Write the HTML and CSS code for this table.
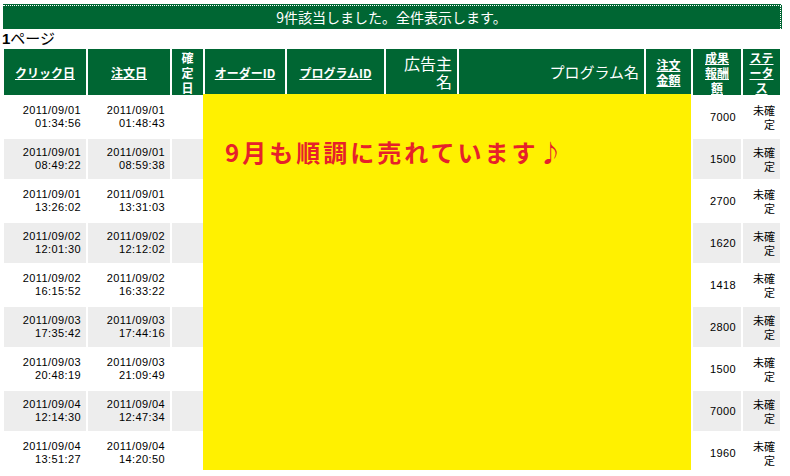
FILE: index.html
```html
<!DOCTYPE html>
<html lang="ja">
<head>
<meta charset="utf-8">
<title>成果一覧</title>
<link rel="stylesheet" href="styles.css">
</head>
<body>
<div class="banner">9件該当しました。全件表示します。</div>
<div class="pager"><b>1</b>ページ</div>
<div class="wrap">
  <div class="grid">
    <div class="row head">
      <div class="c"><a href="#">クリック日</a></div>
      <div class="c"><a href="#">注文日</a></div>
      <div class="c narrow">確<br>定<br>日</div>
      <div class="c"><a href="#">オーダーID</a></div>
      <div class="c"><a href="#">プログラムID</a></div>
      <div class="r big adv">広告主<br>名</div>
      <div class="r big">プログラム名</div>
      <div class="c"><a href="#">注文<br>金額</a></div>
      <div class="c"><a href="#">成果<br>報酬<br>額</a></div>
      <div class="c"><a href="#">ステ<br>ータ<br>ス</a></div>
    </div>
    <div class="row">
      <div>2011/09/01<br>01:34:56</div><div>2011/09/01<br>01:48:43</div><div></div><div></div><div></div><div></div><div></div><div></div><div>7000</div><div class="st">未確<br>定</div>
    </div>
    <div class="row alt">
      <div>2011/09/01<br>08:49:22</div><div>2011/09/01<br>08:59:38</div><div></div><div></div><div></div><div></div><div></div><div></div><div>1500</div><div class="st">未確<br>定</div>
    </div>
    <div class="row">
      <div>2011/09/01<br>13:26:02</div><div>2011/09/01<br>13:31:03</div><div></div><div></div><div></div><div></div><div></div><div></div><div>2700</div><div class="st">未確<br>定</div>
    </div>
    <div class="row alt">
      <div>2011/09/02<br>12:01:30</div><div>2011/09/02<br>12:12:02</div><div></div><div></div><div></div><div></div><div></div><div></div><div>1620</div><div class="st">未確<br>定</div>
    </div>
    <div class="row">
      <div>2011/09/02<br>16:15:52</div><div>2011/09/02<br>16:33:22</div><div></div><div></div><div></div><div></div><div></div><div></div><div>1418</div><div class="st">未確<br>定</div>
    </div>
    <div class="row alt">
      <div>2011/09/03<br>17:35:42</div><div>2011/09/03<br>17:44:16</div><div></div><div></div><div></div><div></div><div></div><div></div><div>2800</div><div class="st">未確<br>定</div>
    </div>
    <div class="row">
      <div>2011/09/03<br>20:48:19</div><div>2011/09/03<br>21:09:49</div><div></div><div></div><div></div><div></div><div></div><div></div><div>1500</div><div class="st">未確<br>定</div>
    </div>
    <div class="row alt">
      <div>2011/09/04<br>12:14:30</div><div>2011/09/04<br>12:47:34</div><div></div><div></div><div></div><div></div><div></div><div></div><div>7000</div><div class="st">未確<br>定</div>
    </div>
    <div class="row">
      <div>2011/09/04<br>13:51:27</div><div>2011/09/04<br>14:20:50</div><div></div><div></div><div></div><div></div><div></div><div></div><div>1960</div><div class="st">未確<br>定</div>
    </div>
  </div>
  <div class="note">9月も順調に売れています♪</div>
</div>
<div class="foot">※クリック日時・注文日時は日本時間で表示しています。□前へ　次へ□</div>
</body>
</html>
```

FILE: styles.css
```css
html, body {
  margin: 0;
  padding: 0;
  background: #ffffff;
  font-family: "Noto Sans CJK JP", sans-serif;
  color: #000000;
}

.banner {
  margin: 5px 0 0 3px;
  width: 777px;
  height: 23px;
  background: #006633;
  border-top: 1px dotted #ffffff;
  border-right: 1px dotted #ffffff;
  color: #ffffff;
  font-size: 14px;
  line-height: 23px;
  text-align: center;
  box-shadow: 0 -1px 0 #006633, 1px 0 0 #006633;
}

.pager {
  margin-left: 2px;
  height: 18px;
  font-size: 15px;
  line-height: 18px;
}

.pager b {
  font-family: "Liberation Sans", sans-serif;
  font-weight: 700;
}

.wrap {
  position: relative;
  margin-left: 2px;
  width: 780px;
}

.grid {
  display: grid;
  grid-template-columns: 82px 82px 31px 80px 97px 71px 185px 45px 48px 37px;
  grid-template-rows: 46px repeat(9, 40px);
  gap: 2px;
  padding: 2px;
  font-family: "Liberation Sans", "Noto Sans CJK JP", sans-serif;
  font-size: 11px;
  line-height: 13px;
}

.row {
  display: contents;
}

.row > div {
  display: flex;
  flex-direction: column;
  justify-content: center;
  align-items: flex-end;
  text-align: right;
  padding: 0 5px;
  background: #ffffff;
  letter-spacing: 0.4px;
}

.row > .st {
  font-family: "Noto Sans CJK JP", sans-serif;
  line-height: 14px;
  letter-spacing: 0;
}

.row.alt > div {
  background: #ededed;
}

.row.head > div {
  background: #006633;
  color: #ffffff;
  font-family: "Noto Sans CJK JP", sans-serif;
  font-size: 12px;
  font-weight: 700;
  line-height: 15px;
  padding: 0 3px;
  letter-spacing: 0;
}

.row.head > .c {
  align-items: center;
  text-align: center;
}

.row.head > .r {
  align-items: flex-end;
  text-align: right;
  padding-right: 5px;
}

.row.head > .big {
  font-size: 15px;
  font-weight: 400;
  line-height: 18px;
}

.row.head > .adv {
  font-size: 16px;
}

.row.head a {
  color: #ffffff;
  text-decoration: underline;
}

.note {
  position: absolute;
  left: 201px;
  top: 47px;
  width: 466px;
  height: 331px;
  padding: 45px 0 0 22px;
  background: #fff100;
  color: #e6212a;
  font-size: 24px;
  font-weight: 700;
  line-height: 26px;
  letter-spacing: 3px;
}

.foot {
  margin: 0 0 0 2px;
  font-size: 12px;
  line-height: 16px;
  color: #333333;
}
```
